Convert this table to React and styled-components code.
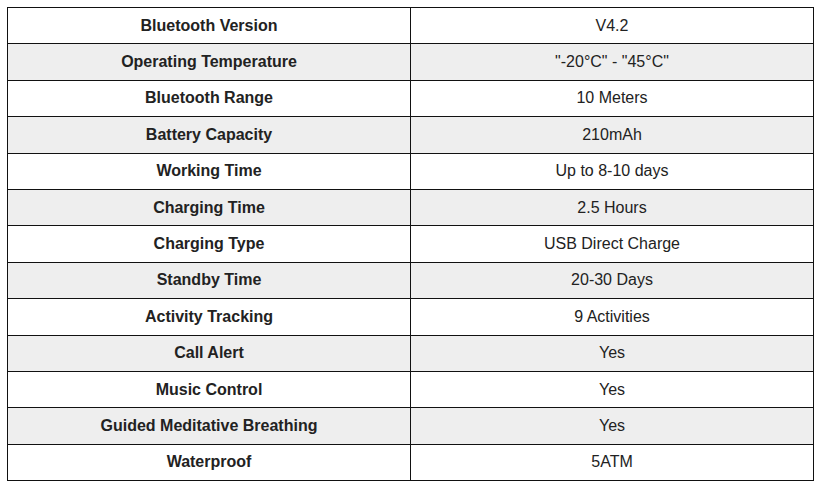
import React from "react";
import styled, { createGlobalStyle } from "styled-components";

const GlobalStyle = createGlobalStyle`
  body {
    margin: 0;
    background: #ffffff;
    font-family: "Liberation Sans", Arial, sans-serif;
  }
`;

const Wrapper = styled.div`
  padding: 7px 0 0 7px;
`;

const SpecTable = styled.table`
  border-collapse: collapse;
  width: 807px;
  table-layout: fixed;
  color: #222222;
  font-size: 16px;
  td {
    border: 1px solid #111111;
    height: 35.4px;
    padding: 0 8px;
    text-align: center;
    vertical-align: middle;
  }
  .label {
    width: 386px;
    font-weight: bold;
  }
`;

const Row = styled.tr`
  background: ${(props) => (props.$striped ? "#eeeeee" : "#ffffff")};
`;

const specs = [
  ["Bluetooth Version", "V4.2"],
  ["Operating Temperature", "\"-20°C\" - \"45°C\""],
  ["Bluetooth Range", "10 Meters"],
  ["Battery Capacity", "210mAh"],
  ["Working Time", "Up to 8-10 days"],
  ["Charging Time", "2.5 Hours"],
  ["Charging Type", "USB Direct Charge"],
  ["Standby Time", "20-30 Days"],
  ["Activity Tracking", "9 Activities"],
  ["Call Alert", "Yes"],
  ["Music Control", "Yes"],
  ["Guided Meditative Breathing", "Yes"],
  ["Waterproof", "5ATM"],
];

const App = () => {
  return (
    <Wrapper>
      <GlobalStyle />
      <SpecTable>
        <tbody>
          {specs.map(([label, value], i) => (
            <Row key={label} $striped={i % 2 === 1}>
              <td className="label">{label}</td>
              <td>{value}</td>
            </Row>
          ))}
        </tbody>
      </SpecTable>
    </Wrapper>
  );
};

export default App;
